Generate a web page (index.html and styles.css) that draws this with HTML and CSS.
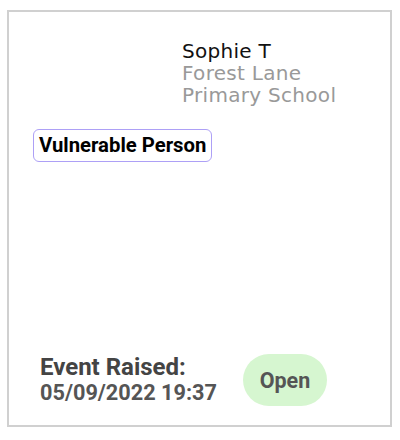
FILE: index.html
```html
<!DOCTYPE html>
<html lang="en">
<head>
    <meta charset="UTF-8">
    <title>Event Card</title>
    <link rel="stylesheet" href="styles.css">
</head>
<body>
    <div class="card">
        <div class="person">
            <div class="person-name">Sophie T</div>
            <div class="person-school">Forest Lane<br>Primary School</div>
        </div>

        <div class="tags">
            <span class="tag">Vulnerable Person</span>
        </div>

        <div class="card-footer">
            <div class="event-info">
                <div class="event-label">Event Raised:</div>
                <div class="event-date">05/09/2022 19:37</div>
            </div>
            <div class="status">Open</div>
        </div>
    </div>
</body>
</html>
```

FILE: styles.css
```css
* {
    margin: 0;
    padding: 0;
    box-sizing: border-box;
}

body {
    font-family: 'Roboto', 'Liberation Sans', sans-serif;
    background: #fff;
    padding: 10px 8px 13px 7px;
    height: 440px;
}

.card {
    height: 100%;
    border: 2px solid #d0d0d0;
    display: flex;
    flex-direction: column;
    padding: 28px 24px 19px 24px;
}

.person {
    margin-left: 149px;
    font-family: 'DejaVu Sans', 'Open Sans', sans-serif;
    font-size: 20px;
    letter-spacing: 0.3px;
    line-height: 22px;
}

.person-name {
    color: #111;
}

.person-school {
    color: #999;
}

.tags {
    margin-top: 23px;
}

.tag {
    display: inline-block;
    font-weight: 700;
    font-size: 20.3px;
    line-height: 21px;
    color: #000;
    border: 1px solid #ada0f6;
    border-radius: 6px;
    padding: 5px 5px 5px 5px;
}

.card-footer {
    margin-top: auto;
    display: flex;
    align-items: center;
    padding-left: 7px;
}

.event-label {
    font-weight: 700;
    font-size: 24px;
    line-height: 26px;
    color: #444;
}

.event-date {
    font-weight: 700;
    font-size: 21.7px;
    line-height: 26px;
    color: #555;
}

.status {
    margin-left: 26px;
    background: #d6f6d0;
    color: #555;
    font-weight: 700;
    font-size: 21.5px;
    width: 84px;
    height: 52px;
    border-radius: 26px;
    display: flex;
    align-items: center;
    justify-content: center;
}
```
